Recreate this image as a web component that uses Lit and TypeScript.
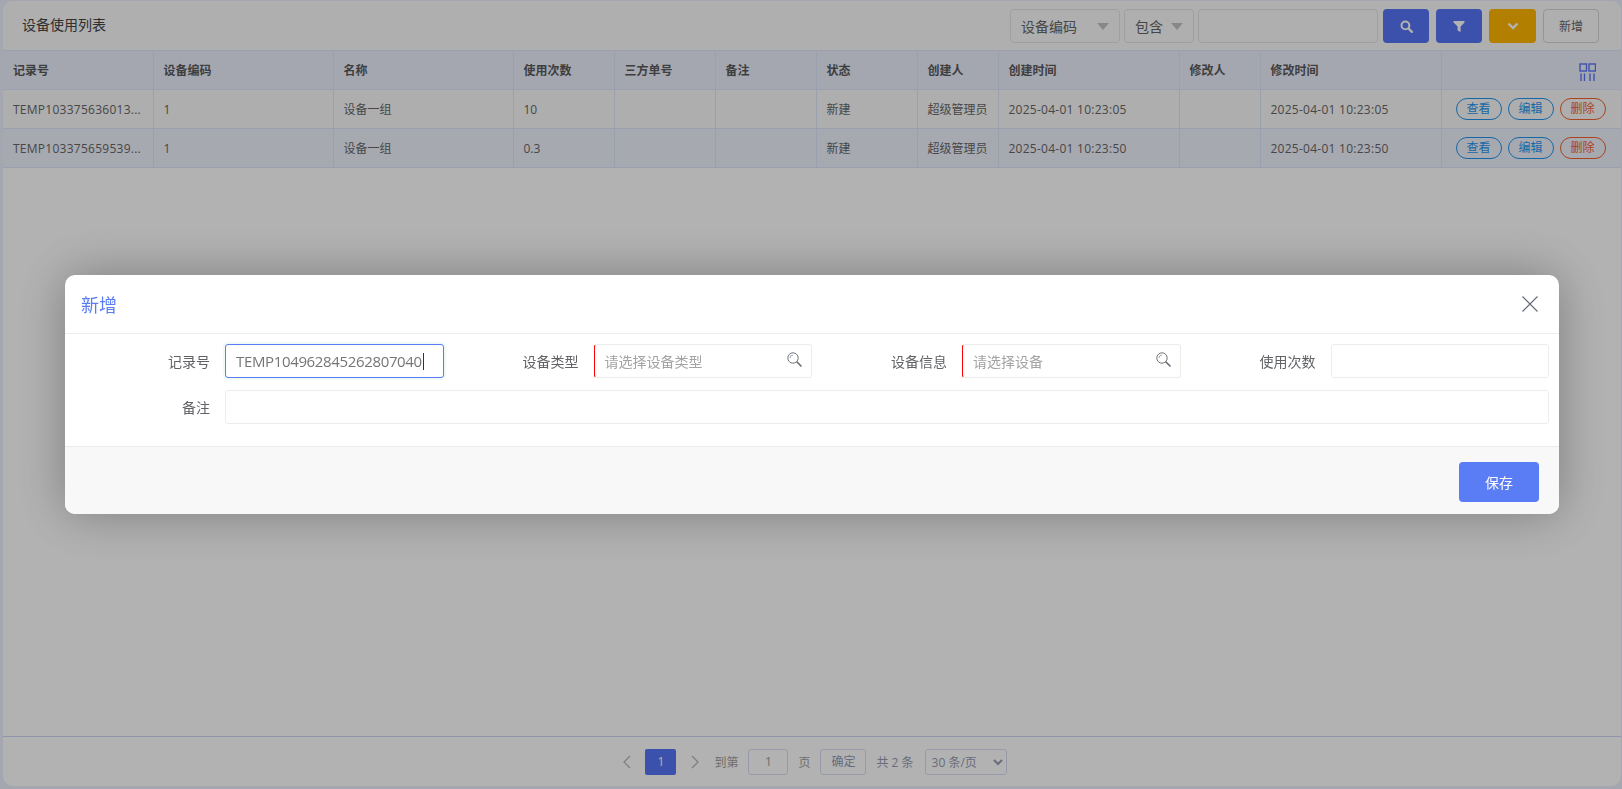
import { LitElement, css, html } from 'lit';
import { customElement, state } from 'lit/decorators.js';

interface Row {
  id: string;
  code: string;
  name: string;
  times: string;
  state: string;
  creator: string;
  created: string;
  modified: string;
}

const COLS = [150, 180, 180, 101, 101, 101, 101, 81, 181, 81, 181, 180];
const HEADS = ['记录号', '设备编码', '名称', '使用次数', '三方单号', '备注', '状态', '创建人', '创建时间', '修改人', '修改时间'];

const ROWS: Row[] = [
  {
    id: 'TEMP103375636013...',
    code: '1',
    name: '设备一组',
    times: '10',
    state: '新建',
    creator: '超级管理员',
    created: '2025-04-01 10:23:05',
    modified: '2025-04-01 10:23:05',
  },
  {
    id: 'TEMP103375659539...',
    code: '1',
    name: '设备一组',
    times: '0.3',
    state: '新建',
    creator: '超级管理员',
    created: '2025-04-01 10:23:50',
    modified: '2025-04-01 10:23:50',
  },
];

const searchGlyph = html`<svg class="lens" width="15" height="15" viewBox="0 0 15 15" fill="none">
  <circle cx="6" cy="6" r="5.2" stroke="#777" stroke-width="1" />
  <path d="M3 6a3 3 0 0 1 3-3" stroke="#9ab" stroke-width="1" />
  <path d="M10 10l4 4" stroke="#667" stroke-width="1.6" stroke-linecap="round" />
</svg>`;

@customElement('app-root')
export class AppRoot extends LitElement {
  @state() private recordNo = 'TEMP104962845262807040';

  private renderToolbar() {
    return html`
      <div class="toolbar">
        <div class="title">设备使用列表</div>
        <div class="tools">
          <div class="pick pick-field">设备编码<i class="caret"></i></div>
          <div class="pick pick-op">包含<i class="caret"></i></div>
          <input class="query" type="text" />
          <button class="tool blue" type="button">
            <svg width="13" height="13" viewBox="0 0 13 13" fill="none">
              <circle cx="5.4" cy="5.4" r="3.9" stroke="#fff" stroke-width="2" />
              <path d="M8.5 8.5l3.4 3.4" stroke="#fff" stroke-width="2.2" stroke-linecap="round" />
            </svg>
          </button>
          <button class="tool blue" type="button">
            <svg width="12" height="11" viewBox="0 0 12 11"><path d="M0.5 0h11v1.6L7.6 5.6V11L4.6 9.4V5.6L0.5 1.6z" fill="#fff" /></svg>
          </button>
          <button class="tool amber" type="button">
            <svg width="12" height="8" viewBox="0 0 12 8" fill="none"><path d="M1.5 1.5L6 6l4.5-4.5" stroke="#fff" stroke-width="2.4" /></svg>
          </button>
          <button class="add" type="button">新增</button>
        </div>
      </div>
    `;
  }

  private renderTable() {
    return html`
      <table>
        <colgroup>
          ${COLS.map((w) => html`<col style="width:${w}px" />`)}
        </colgroup>
        <thead>
          <tr>
            ${HEADS.map((h) => html`<th>${h}</th>`)}
            <th class="colset">
              <svg width="17" height="18" viewBox="0 0 17 18" fill="none" stroke="#5775f5">
                <rect x="1" y="1" width="6.5" height="7" stroke-width="1.4" />
                <rect x="10" y="1" width="6.5" height="7" stroke-width="1.4" />
                <path d="M2 10.5V18M5.5 10.5V18M11 10.5V18M15 10.5V18" stroke-width="1.4" />
              </svg>
            </th>
          </tr>
        </thead>
        <tbody>
          ${ROWS.map(
            (r) => html`
              <tr>
                <td class="num">${r.id}</td>
                <td>${r.code}</td>
                <td>${r.name}</td>
                <td>${r.times}</td>
                <td></td>
                <td></td>
                <td>${r.state}</td>
                <td>${r.creator}</td>
                <td class="num">${r.created}</td>
                <td></td>
                <td class="num">${r.modified}</td>
                <td class="ops">
                  <div class="op-row">
                    <a class="op">查看</a>
                    <a class="op">编辑</a>
                    <a class="op danger">删除</a>
                  </div>
                </td>
              </tr>
            `
          )}
        </tbody>
      </table>
    `;
  }

  private renderPager() {
    return html`
      <div class="pager">
        <svg class="chev prev" width="9" height="14" viewBox="0 0 9 14" fill="none"><path d="M8 1L2 7l6 6" stroke="#b4b4b4" stroke-width="1.2" /></svg>
        <span class="cur">1</span>
        <svg class="chev next" width="9" height="14" viewBox="0 0 9 14" fill="none"><path d="M1 1l6 6-6 6" stroke="#b4b4b4" stroke-width="1.2" /></svg>
        <span>到第</span>
        <span class="box jump">1</span>
        <span>页</span>
        <span class="box ok">确定</span>
        <span class="total">共 2 条</span>
        <select>
          <option>30 条/页</option>
        </select>
      </div>
    `;
  }

  private renderDialog() {
    return html`
      <div class="mask">
        <div class="dialog">
          <header>
            <span class="dlg-title">新增</span>
            <svg width="16" height="16" viewBox="0 0 16 16" fill="none"><path d="M0.5 0.5l15 15M15.5 0.5l-15 15" stroke="#5f6b7a" stroke-width="1.1" /></svg>
          </header>
          <div class="form">
            <div class="field">
              <label>记录号</label>
              <div class="control focus"><span class="typed">${this.recordNo}</span><i class="cursor"></i></div>
            </div>
            <div class="field">
              <label>设备类型</label>
              <div class="control must"><span class="hint">请选择设备类型</span>${searchGlyph}</div>
            </div>
            <div class="field">
              <label>设备信息</label>
              <div class="control must"><span class="hint">请选择设备</span>${searchGlyph}</div>
            </div>
            <div class="field">
              <label>使用次数</label>
              <div class="control"></div>
            </div>
            <div class="field wide">
              <label>备注</label>
              <div class="control"></div>
            </div>
          </div>
          <footer>
            <button class="save" type="button">保存</button>
          </footer>
        </div>
      </div>
    `;
  }

  render() {
    return html`
      <div class="card">
        ${this.renderToolbar()}
        <div class="list">${this.renderTable()}</div>
        ${this.renderPager()}
      </div>
      ${this.renderDialog()}
    `;
  }

  static styles = css`
    :host {
      display: block;
      box-sizing: border-box;
      height: 100vh;
      padding: 1px 1px 3px 3px;
      background: #ebeffd;
      font-family: 'Open Sans', 'Noto Sans CJK SC', sans-serif;
      font-size: 12px;
      color: #666;
    }

    .card {
      display: flex;
      flex-direction: column;
      height: 100%;
      background: #fff;
      border-radius: 10px;
      overflow: hidden;
    }

    .toolbar {
      display: flex;
      align-items: center;
      justify-content: space-between;
      flex: none;
      height: 49px;
      padding: 0 22px 0 19px;
      background: #fbfbfb;
    }

    .title {
      font-size: 14px;
      color: #444;
      margin-top: -4px;
    }

    .tools {
      display: flex;
      align-items: center;
      margin-top: 1px;
    }

    .pick {
      box-sizing: border-box;
      display: flex;
      align-items: center;
      justify-content: space-between;
      height: 34px;
      margin-right: 4px;
      padding: 0 10px;
      font-size: 14px;
      border: 1px solid #e4e4e4;
      border-radius: 4px;
    }

    .pick-field {
      width: 110px;
    }

    .pick-op {
      width: 70px;
    }

    .caret {
      width: 0;
      height: 0;
      border-left: 6px solid transparent;
      border-right: 6px solid transparent;
      border-top: 7px solid #c2c2c2;
    }

    .query {
      box-sizing: border-box;
      width: 180px;
      height: 34px;
      margin-right: 5px;
      border: 1px solid #e4e4e4;
      border-radius: 4px;
      background: transparent;
      outline: none;
    }

    .tool {
      display: flex;
      align-items: center;
      justify-content: center;
      width: 46px;
      height: 34px;
      margin-right: 7px;
      padding: 0;
      border: 0;
      border-radius: 4px;
    }

    .blue {
      background: #5775f5;
    }

    .amber {
      width: 47px;
      background: #ffb700;
    }

    .add {
      width: 56px;
      height: 34px;
      padding: 0;
      font: inherit;
      color: #666;
      background: transparent;
      border: 1px solid #d4d4d4;
      border-radius: 4px;
    }

    .list {
      flex: 1;
      min-height: 0;
    }

    table {
      table-layout: fixed;
      width: 1618px;
      border-collapse: collapse;
    }

    th,
    td {
      box-sizing: border-box;
      height: 39px;
      padding: 0 10px;
      text-align: left;
      white-space: nowrap;
      border-right: 1px solid #dfe5fa;
      border-bottom: 1px solid #dfe5fa;
    }

    thead tr {
      border-top: 1px solid #dfe5fa;
    }

    th {
      font-weight: 700;
      color: #5a5a5a;
      background: #ecf0fd;
    }

    tbody tr {
      background: #f9f9f9;
    }

    tbody tr:nth-child(even) {
      background: #f0f2fd;
    }

    th:last-child,
    td:last-child {
      border-right: 0;
    }

    .num {
      letter-spacing: 0.26px;
    }

    .colset {
      padding: 3px 25px 0 0;
      text-align: right;
    }

    .colset svg {
      display: inline-block;
      vertical-align: middle;
    }

    .ops {
      padding: 0 14px;
    }

    .op-row {
      display: flex;
      gap: 6px;
    }

    .op {
      box-sizing: border-box;
      width: 46px;
      height: 22px;
      line-height: 20px;
      text-align: center;
      color: #1f96ee;
      border: 1px solid #1f96ee;
      border-radius: 11px;
    }

    .danger {
      color: #f4602c;
      border-color: #f4602c;
    }

    .pager {
      display: flex;
      align-items: center;
      justify-content: center;
      flex: none;
      gap: 10px;
      height: 50px;
      padding: 1px 0 0 5px;
      box-sizing: border-box;
      border-top: 1px solid #cdd5f5;
      color: #9d9d9d;
    }

    .prev {
      margin-right: 4px;
    }

    .next {
      margin: 0 4px 0 5px;
    }

    .cur {
      width: 31px;
      height: 26px;
      line-height: 26px;
      text-align: center;
      color: #fff;
      background: #5775f5;
      border-radius: 2px;
    }

    .box {
      box-sizing: border-box;
      height: 26px;
      line-height: 24px;
      text-align: center;
      border: 1px solid #d9dff3;
      border-radius: 3px;
    }

    .jump {
      width: 40px;
    }

    .ok {
      width: 46px;
      color: #939ab5;
    }

    .total {
      color: #959ab0;
    }

    select {
      box-sizing: border-box;
      width: 82px;
      height: 26px;
      margin-left: 1px;
      padding-left: 2px;
      font: inherit;
      color: #959ab0;
      background: transparent;
      border: 1px solid #d9dff3;
      border-radius: 3px;
      outline: none;
    }

    .mask {
      position: fixed;
      inset: 0;
      background: rgba(0, 0, 0, 0.3);
    }

    .dialog {
      position: absolute;
      left: 65px;
      top: 275px;
      width: 1494px;
      height: 239px;
      display: flex;
      flex-direction: column;
      overflow: hidden;
      background: #fff;
      border-radius: 10px;
      box-shadow: 0 0 50px rgba(0, 0, 0, 0.3);
    }

    header {
      box-sizing: border-box;
      display: flex;
      align-items: center;
      justify-content: space-between;
      flex: none;
      height: 59px;
      padding: 0 21px 0 16px;
      border-bottom: 1px solid #ededed;
    }

    .dlg-title {
      font-size: 18px;
      color: #5a7cf5;
    }

    .form {
      display: grid;
      grid-template-columns: repeat(4, minmax(0, 1fr));
      row-gap: 12px;
      flex: 1;
      align-content: start;
      padding: 10px 10px 0;
    }

    .field {
      display: flex;
      align-items: center;
      min-width: 0;
    }

    .wide {
      grid-column: 1 / -1;
    }

    label {
      box-sizing: border-box;
      flex: none;
      width: 150px;
      padding-right: 15px;
      text-align: right;
      font-size: 14px;
      color: #606266;
    }

    .control {
      box-sizing: border-box;
      flex: 1;
      min-width: 0;
      display: flex;
      align-items: center;
      height: 34px;
      padding: 0 10px;
      background: #fff;
      border: 1px solid #ececec;
      border-radius: 3px;
    }

    .focus {
      border-color: #5a7cf5;
      box-shadow: 0 0 0 2px #effaf7;
      font-size: 15px;
      letter-spacing: -0.35px;
      color: #757575;
    }

    .typed {
      line-height: 20px;
    }

    .cursor {
      width: 1px;
      height: 17px;
      margin-left: 1px;
      background: #333;
    }

    .must {
      justify-content: space-between;
      border-left: 1px solid #f00;
      padding-right: 9px;
    }

    .hint {
      font-size: 14px;
      color: #a3a3a3;
    }

    .lens {
      margin-top: -4px;
    }

    footer {
      box-sizing: border-box;
      display: flex;
      align-items: flex-start;
      justify-content: flex-end;
      flex: none;
      height: 68px;
      padding: 15px 20px 0 0;
      background: #f8f8f8;
      border-top: 1px solid #ececec;
    }

    .save {
      width: 80px;
      height: 40px;
      font: inherit;
      font-size: 14px;
      color: #fff;
      background: #5a7cf5;
      border: 0;
      border-radius: 4px;
    }
  `;
}

declare global {
  interface HTMLElementTagNameMap {
    'app-root': AppRoot;
  }
}
